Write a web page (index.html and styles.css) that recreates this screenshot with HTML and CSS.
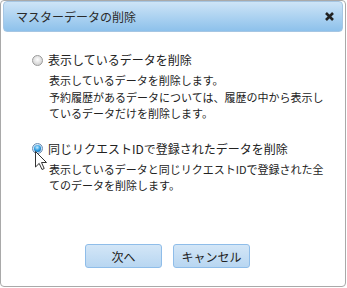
FILE: index.html
```html
<!DOCTYPE html>
<html lang="ja">
<head>
    <meta charset="UTF-8">
    <title>マスターデータの削除</title>
    <link rel="stylesheet" href="styles.css">
</head>
<body>
    <div class="dialog">
        <div class="titlebar">
            <span class="title">マスターデータの削除</span>
            <svg class="close" width="9" height="9" viewBox="0 0 9 9">
                <path d="M1 1 L8 8 M8 1 L1 8" stroke="#222" stroke-width="2.6" stroke-linecap="butt"/>
            </svg>
        </div>

        <div class="content">
            <div class="option">
                <span class="radio"></span>
                <span class="label">表示しているデータを削除</span>
                <p class="desc">表示しているデータを削除します。<br>予約履歴があるデータについては、履歴の中から表示し<br>ているデータだけを削除します。</p>
            </div>

            <div class="option">
                <span class="radio checked"></span>
                <span class="label">同じリクエストIDで登録されたデータを削除</span>
                <p class="desc">表示しているデータと同じリクエストIDで登録された全<br>てのデータを削除します。</p>
                <!-- mouse pointer over the radio -->
                <svg class="cursor" width="13" height="20" viewBox="0 0 13 20">
                    <path d="M0.5 0.5 L0.5 16 L4.2 12.4 L7 18.5 L9.2 17.5 L6.5 11.5 L11.5 11.5 Z" fill="#fff" stroke="#333" stroke-width="1"/>
                </svg>
            </div>
        </div>

        <div class="actions">
            <button class="btn">次へ</button>
            <button class="btn">キャンセル</button>
        </div>
    </div>
</body>
</html>
```
FILE: styles.css
```css
* {
    margin: 0;
    padding: 0;
    box-sizing: border-box;
}

body {
    background: #fff;
    font-family: 'Noto Sans CJK JP', 'Noto Sans', sans-serif;
    color: #222;
}

.dialog {
    width: 346px;
    height: 287px;
    border: 1px solid #a9a9a9;
    border-radius: 4px;
    padding: 0 2px;
    display: flex;
    flex-direction: column;
    background: #fff;
}

.titlebar {
    height: 31px;
    border: 1px solid #a6c6e3;
    border-radius: 4px;
    background: linear-gradient(#cde4f7, #8dc1eb);
    display: flex;
    align-items: center;
    justify-content: space-between;
    padding: 0 8px 0 12px;
}

.title {
    font-size: 12px;
    color: #2a2a2a;
}

.content {
    padding: 20px 0 0 29px;
}

.option {
    position: relative;
    display: grid;
    grid-template-columns: 11px auto;
    column-gap: 5px;
    align-items: center;
    margin-bottom: 19px;
}

.radio {
    width: 11px;
    height: 11px;
    border-radius: 50%;
    border: 1px solid #9a9a9a;
    background: radial-gradient(circle at 50% 40%, #fdfdfd, #d6d6d6 70%, #c4c4c4);
    display: flex;
    align-items: center;
    justify-content: center;
}

.radio.checked {
    border-color: #6a8cb0;
    background: radial-gradient(circle at 50% 40%, #f3f9ff, #c2dcf3 75%);
}

.radio.checked::after {
    content: '';
    width: 7px;
    height: 7px;
    border-radius: 50%;
    background: radial-gradient(circle at 45% 35%, #c9ecff, #2a9be0 50%, #0b4f92);
}

.label {
    font-size: 12px;
    line-height: 16px;
}

.desc {
    grid-column: 2;
    margin-top: 4px;
    margin-left: 1px;
    font-size: 11px;
    line-height: 16.5px;
    white-space: nowrap;
}

.cursor {
    position: absolute;
    left: 3px;
    top: 10px;
}

.actions {
    margin-top: auto;
    margin-bottom: 18px;
    display: flex;
    gap: 11px;
    padding-left: 82px;
}

.btn {
    width: 77px;
    height: 24px;
    border: 1px solid #8fbde9;
    border-radius: 3px;
    background: linear-gradient(#d3e6f7, #b8d6f1);
    font-family: 'Noto Sans CJK JP', sans-serif;
    font-size: 12px;
    color: #222;
}
```
